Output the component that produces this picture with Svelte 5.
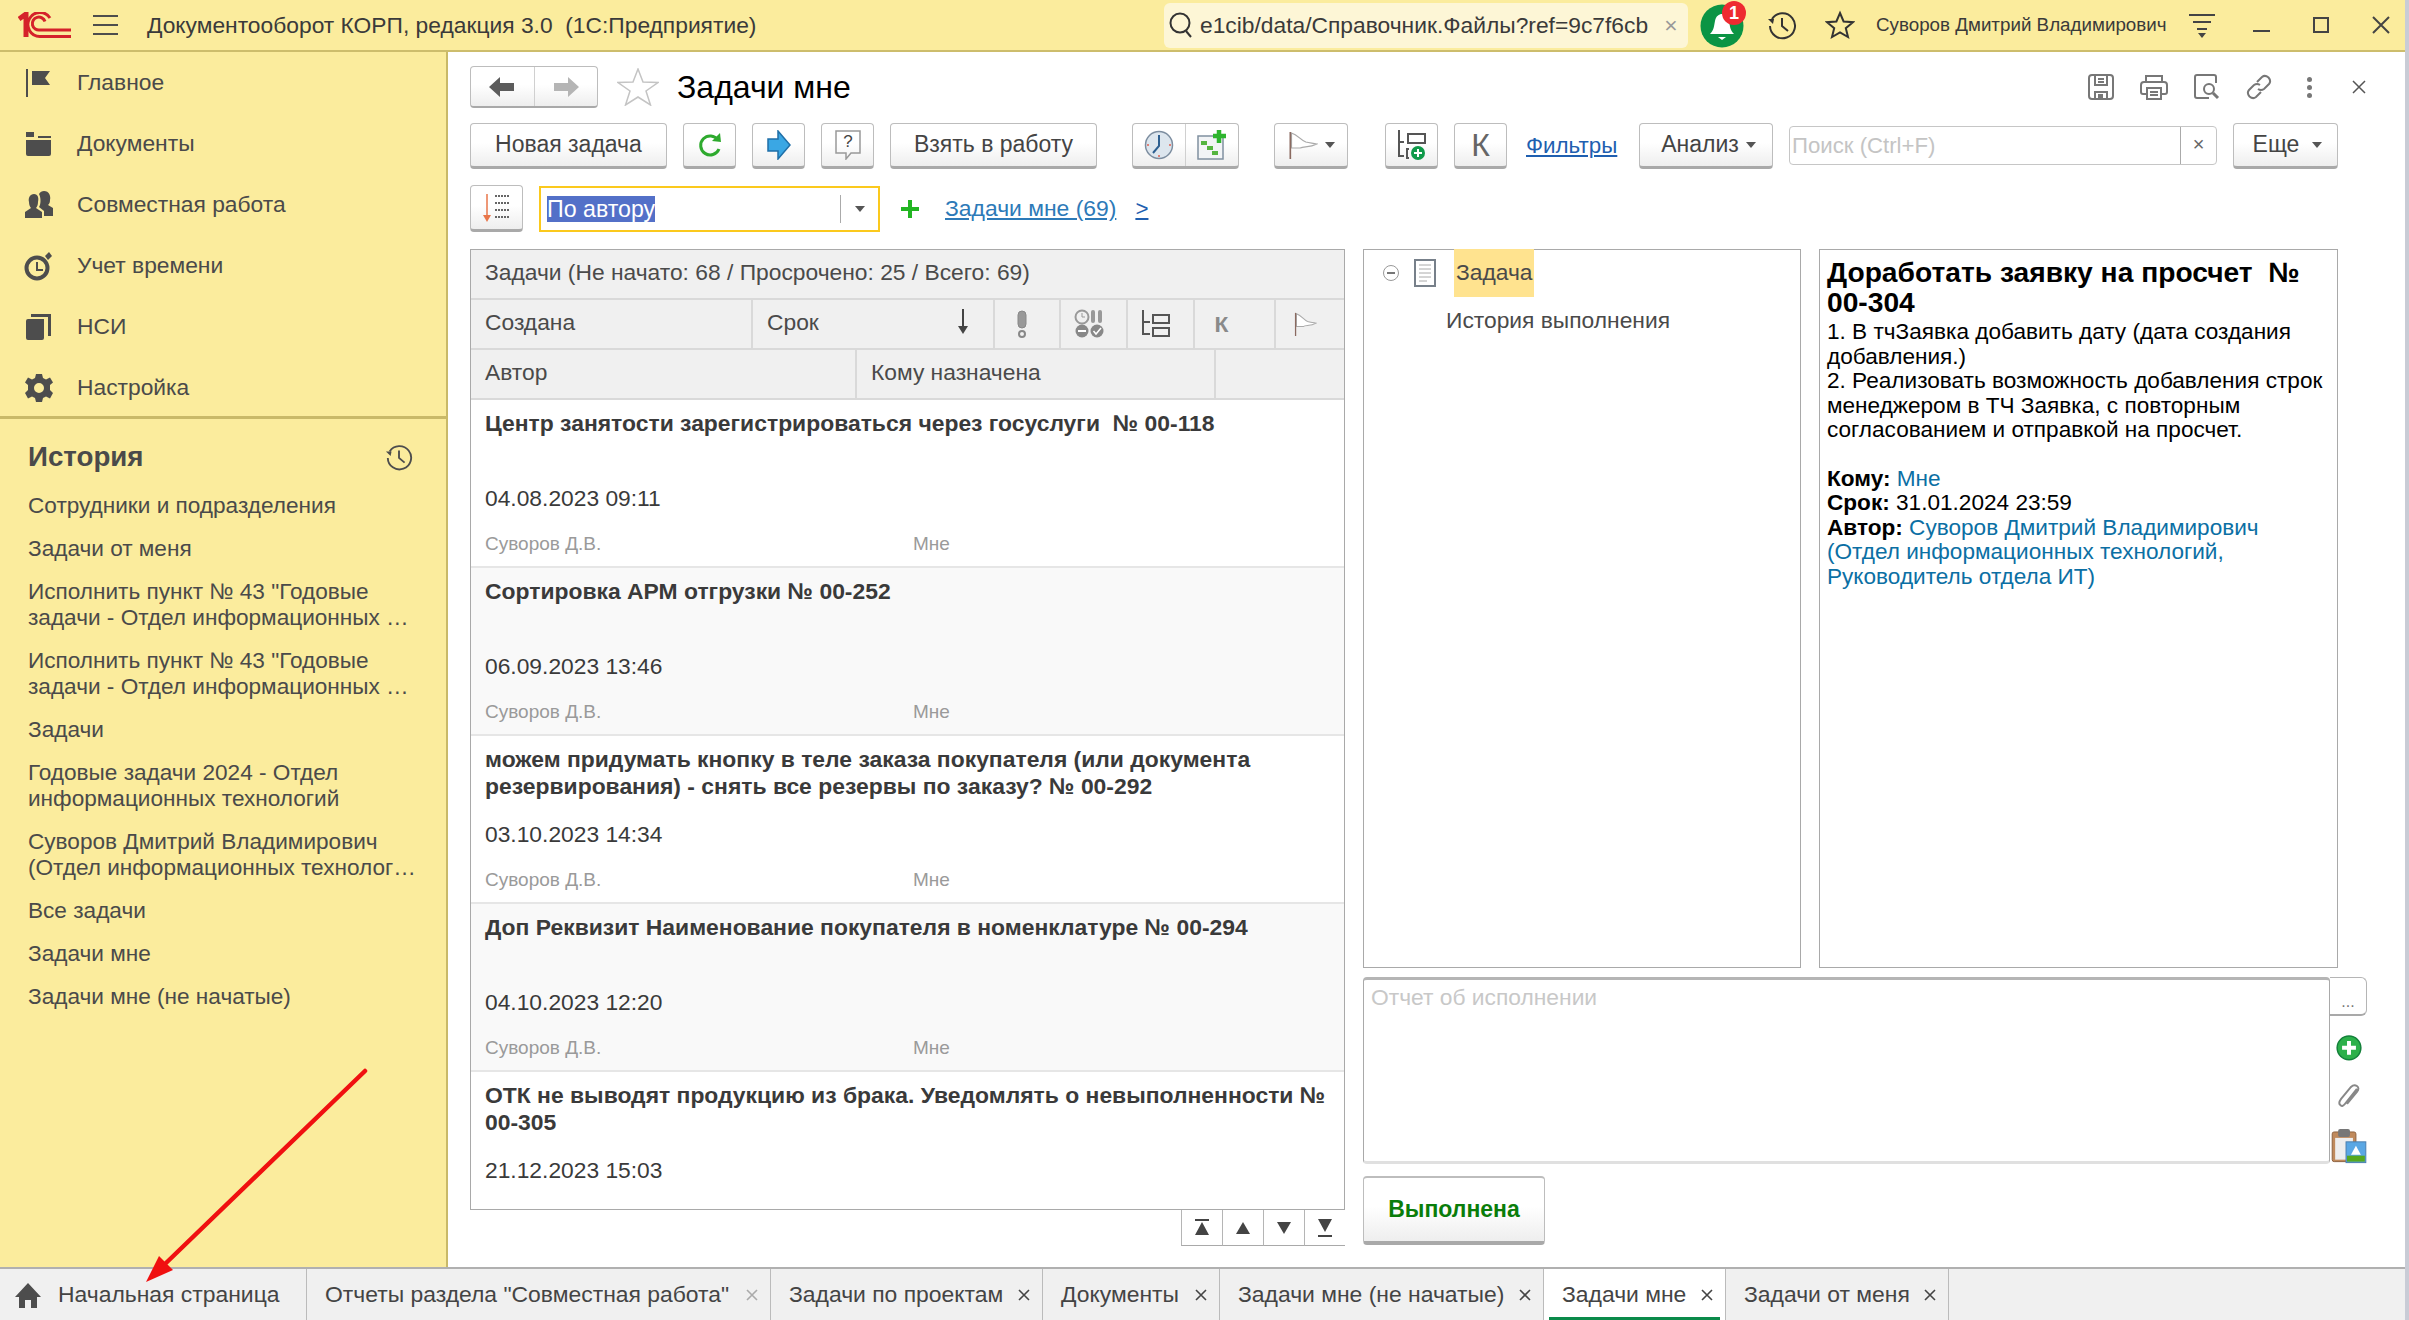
<script>
  const nav = ['Главное', 'Документы', 'Совместная работа', 'Учет времени', 'НСИ', 'Настройка'];

  const history = [
    'Сотрудники и подразделения',
    'Задачи от меня',
    'Исполнить пункт № 43 "Годовые задачи - Отдел информационных …',
    'Исполнить пункт № 43 "Годовые задачи - Отдел информационных …',
    'Задачи',
    'Годовые задачи 2024 - Отдел информационных технологий',
    'Суворов Дмитрий Владимирович (Отдел информационных технолог…',
    'Все задачи',
    'Задачи мне',
    'Задачи мне (не начатые)'
  ];

  // the last row is cut by the table's bottom edge, its author line is out of view
  const tasks = [
    { title: 'Центр занятости зарегистрироваться через госуслуги  № 00-118', date: '04.08.2023 09:11', meta: true },
    { title: 'Сортировка АРМ отгрузки № 00-252', date: '06.09.2023 13:46', meta: true },
    { title: 'можем придумать кнопку в теле заказа покупателя (или документа резервирования) - снять все резервы по заказу? № 00-292', date: '03.10.2023 14:34', meta: true },
    { title: 'Доп Реквизит Наименование покупателя в номенклатуре № 00-294', date: '04.10.2023 12:20', meta: true },
    { title: 'ОТК не выводят продукцию из брака. Уведомлять о невыполненности № 00-305', date: '21.12.2023 15:03', meta: false }
  ];

  const tabs = [
    { label: 'Начальная страница', w: 307, home: true },
    { label: 'Отчеты раздела "Совместная работа"', w: 464, dim: true },
    { label: 'Задачи по проектам', w: 272 },
    { label: 'Документы', w: 177 },
    { label: 'Задачи мне (не начатые)', w: 324 },
    { label: 'Задачи мне', w: 182, active: true },
    { label: 'Задачи от меня', w: 223 }
  ];
</script>

<div class="page">
  <div class="window">
    <header class="topbar">
      <svg class="logo" width="54" height="26" viewBox="0 0 54 26" fill="none" stroke="#d5222a">
        <path d="M1 7 L8 2 V25" stroke-width="5" />
        <path d="M32 6 A12 12 0 1 0 22 24.5 H53" stroke-width="3" />
        <path d="M27 9.5 A6.5 6.5 0 1 0 22 18 H53" stroke-width="3" />
      </svg>
      <div class="burger"><i></i><i></i><i></i></div>
      <div class="app-title">Документооборот КОРП, редакция 3.0  (1С:Предприятие)</div>
      <div class="url">
        <svg width="26" height="28" viewBox="0 0 26 28" fill="none" stroke="#333" stroke-width="2"><circle cx="12" cy="12" r="9.5" /><path d="M18 20 L23 26" /></svg>
        <span>e1cib/data/Справочник.Файлы?ref=9c7f6cb</span>
        <b>×</b>
      </div>
      <div class="bell">
        <svg width="44" height="44" viewBox="0 0 44 44">
          <circle cx="22" cy="22" r="21.5" fill="#0b9444" />
          <path d="M10 30 C14 26 14 22 15 17 C16 12 19 10 22 10 C25 10 28 12 29 17 C30 22 30 26 34 30 Z M18 33 H26 L22 36 Z" fill="#fff" />
        </svg>
        <span class="badge">1</span>
      </div>
      <svg class="hist" width="30" height="30" viewBox="0 0 30 30" fill="none" stroke="#333" stroke-width="2">
        <path d="M5 9 A12.5 12.5 0 1 1 3 16" /><path d="M1 9 H7 L6 14 Z" fill="#333" stroke="none" /><path d="M15 8 V16 L21 21" />
      </svg>
      <svg class="fav" width="30" height="30" viewBox="0 0 30 30" fill="none" stroke="#333" stroke-width="2">
        <path d="M15 3 L18.6 11.5 L28 12.2 L20.8 18.2 L23 27 L15 22.4 L7 27 L9.2 18.2 L2 12.2 L11.4 11.5 Z" />
      </svg>
      <div class="user">Суворов Дмитрий Владимирович</div>
      <svg class="funnel" width="26" height="26" viewBox="0 0 26 26" fill="none" stroke="#444" stroke-width="2">
        <path d="M0 3 H26 M4 10 H22 M8 17 H18" /><path d="M9 21 H17 L13 26 Z" fill="#444" stroke="none" />
      </svg>
      <div class="winbtn min"></div>
      <div class="winbtn max"></div>
      <svg class="winx" width="18" height="18" viewBox="0 0 18 18" stroke="#444" stroke-width="2"><path d="M1 1 L17 17 M17 1 L1 17" /></svg>
    </header>

    <div class="middle">
      <aside class="sidebar">
        <nav class="nav">
          {#each nav as item, i}
            <div class="nav-item">
              <svg width="30" height="30" viewBox="0 0 30 30" fill="#4d4d4d">
                {#if i === 0}
                  <path d="M2 1 H4 V29 H2 Z M8 3 H26 L21 10 L26 17 H8 Z" />
                {:else if i === 1}
                  <path d="M2 3 H10 V8 H2 Z M14 7 H27 V9 H14 Z M2 11 H27 V25 Q27 27 25 27 H4 Q2 27 2 25 Z" />
                {:else if i === 2}
                  <path d="M10 4 C14 4 15 8 14 12 C14 15 13 17 12 18 L18 22 V28 H1 V22 L7 18 C6 17 5 15 5 12 C4 8 6 4 10 4 Z" />
                  <path d="M20 1 C25 1 27 6 26 10 C26 13 25 14 24 15 L29 18 V26 H20 V21 L15 17 C17 14 17 8 15 4 C16 2 18 1 20 1 Z" />
                {:else if i === 3}
                  <circle cx="13" cy="17" r="10.5" fill="none" stroke="#4d4d4d" stroke-width="4" />
                  <path d="M12 11 H14 V18 H19 V20 H12 Z M21 5 L25 1 L28 5 L24 9 Z" />
                {:else if i === 4}
                  <path d="M2 9 Q2 7 4 7 H20 V26 Q20 28 18 28 H4 Q2 28 2 26 Z M7 2 H27 V24 H24 V5 H7 Z" />
                {:else}
                  <path d="M12 1 H18 L19 5 L22 6.5 L26 4.5 L29 9.5 L26 12 V17 L29 20 L26 25.5 L22 23.5 L19 25 L18 29 H12 L11 25 L8 23.5 L4 25.5 L1 20 L4 17 V12 L1 9.5 L4 4.5 L8 6.5 L11 5 Z M15 10 A5 5 0 1 0 15 20 A5 5 0 1 0 15 10 Z" fill-rule="evenodd" />
                {/if}
              </svg>
              <span>{item}</span>
            </div>
          {/each}
        </nav>
        <section class="history">
          <div class="history-head">
            <span>История</span>
            <svg width="28" height="28" viewBox="0 0 30 30" fill="none" stroke="#4d4d4d" stroke-width="2">
              <path d="M5 9 A12.5 12.5 0 1 1 3 16" /><path d="M1 9 H7 L6 14 Z" fill="#4d4d4d" stroke="none" /><path d="M15 8 V16 L21 21" />
            </svg>
          </div>
          {#each history as item}
            <div class="history-item">{item}</div>
          {/each}
        </section>
      </aside>

      <main class="content">
        <div class="title-row">
          <div class="btn nav-pair">
            <div class="half">
              <svg width="26" height="22" viewBox="0 0 26 22" fill="#5c5c5c"><path d="M0 11 L11 1 V7 H25 V15 H11 V21 Z" /></svg>
            </div>
            <div class="half">
              <svg width="26" height="22" viewBox="0 0 26 22" fill="#b5b5b5"><path d="M26 11 L15 1 V7 H1 V15 H15 V21 Z" /></svg>
            </div>
          </div>
          <svg class="page-star" width="42" height="38" viewBox="0 0 42 38" fill="#fff" stroke="#c4c4c4" stroke-width="1.5">
            <path d="M21 1 L26 14 L41 14.5 L29 23 L33.5 37 L21 29 L8.5 37 L13 23 L1 14.5 L16 14 Z" />
          </svg>
          <h1>Задачи мне</h1>
          <div class="form-tools">
            <svg width="26" height="26" viewBox="0 0 26 26" fill="none" stroke="#777" stroke-width="2">
              <rect x="1" y="1" width="24" height="24" rx="3" /><path d="M7 2 V11 H19 V2 M10 5 H16 M10 8 H16 M7 25 V18 H19 V25" /><rect x="10" y="20" width="5" height="5" fill="#777" stroke="none" />
            </svg>
            <svg width="28" height="26" viewBox="0 0 28 26" fill="none" stroke="#777" stroke-width="2">
              <path d="M6 8 V2 H22 V8 M6 20 H3 Q1 20 1 18 V11 Q1 8 4 8 H24 Q27 8 27 11 V18 Q27 20 25 20 H22" /><rect x="7" y="14" width="14" height="11" /><path d="M10 18 H18 M10 21 H18" />
            </svg>
            <svg width="26" height="26" viewBox="0 0 26 26" fill="none" stroke="#777" stroke-width="2">
              <path d="M15 24 H3 Q1 24 1 22 V3 Q1 1 3 1 H20 Q22 1 22 3 V9" /><circle cx="15" cy="15" r="5" /><path d="M19 19 L24 24" stroke-width="3" />
            </svg>
            <svg width="26" height="26" viewBox="0 0 26 26" fill="none" stroke="#777" stroke-width="2">
              <path d="M11 8 L16 3 Q19 0.5 22.5 3.5 Q25.5 7 23 10 L18 15 Q15 17 12 15" /><path d="M15 18 L10 23 Q7 25.5 3.5 22.5 Q0.5 19 3 16 L8 11 Q11 9 14 11" />
            </svg>
            <div class="dots"><i></i><i></i><i></i></div>
            <svg class="close" width="14" height="14" viewBox="0 0 14 14" stroke="#555" stroke-width="1.5"><path d="M1 1 L13 13 M13 1 L1 13" /></svg>
          </div>
        </div>

        <div class="cmd-row">
          <div class="btn text w197">Новая задача</div>
          <div class="btn icon ml16">
            <svg width="24" height="26" viewBox="0 0 24 26" fill="none" stroke="#2eaa2e" stroke-width="3"><path d="M20 8 A9.5 9.5 0 1 0 21 17" /><path d="M14 9 L23 10 L22 1 Z" fill="#2eaa2e" stroke="none" /></svg>
          </div>
          <div class="btn icon ml16">
            <svg width="24" height="30" viewBox="0 0 24 30"><path d="M1 9 H11 V1 L23 15 L11 29 V21 H1 Z" fill="#3aa7e4" stroke="#1f6fa8" stroke-width="1.5" /></svg>
          </div>
          <div class="btn icon ml16">
            <svg width="28" height="30" viewBox="0 0 28 30" fill="none" stroke="#999" stroke-width="1.5"><path d="M2 1 H26 V23 H17 L12 29 V23 H2 Z" /><text x="14" y="17" text-anchor="middle" fill="#444" stroke="none" class="qmark">?</text></svg>
          </div>
          <div class="btn text ml16 w207">Взять в работу</div>
          <div class="btn pair ml35">
            <div class="half h52">
              <svg width="30" height="30" viewBox="0 0 30 30" fill="#dde6ee" stroke="#7d8ea0" stroke-width="1.5"><circle cx="15" cy="15" r="13.5" /><path d="M15 5 V16 L9 23" fill="none" stroke="#2d5f90" stroke-width="2" /><path d="M3 15 H5 M25 15 H27 M15 25 V27" stroke="#e06050" /></svg>
            </div>
            <div class="half h52">
              <svg width="30" height="30" viewBox="0 0 30 30"><rect x="1" y="6" width="25" height="23" fill="#f2f4f6" stroke="#8090a0" stroke-width="1.5" /><rect x="4" y="11" width="6" height="4" fill="#55b540" /><rect x="10" y="16" width="6" height="4" fill="#55b540" /><rect x="15" y="21" width="6" height="4" fill="#55b540" /><path d="M16 6 H29 M22 0 V13" stroke="#2eb52e" stroke-width="4.5" /></svg>
            </div>
          </div>
          <div class="btn ml35 flagbtn">
            <svg width="31" height="30" viewBox="0 0 28 30" preserveAspectRatio="none" fill="#fff" stroke="#aaa" stroke-width="1.2"><path d="M4 3 C10 5 12 10 17 12 C20 13 22 13 27 14 C20 18 15 16 12 18 L4 18 Z" /><path d="M3 2 V29" stroke="#8a6a60" stroke-width="1.5" /></svg>
            <span class="caret"></span>
          </div>
          <div class="btn icon ml36">
            <svg width="32" height="32" viewBox="0 0 32 32" fill="none" stroke="#555" stroke-width="2">
              <path d="M3 1 V27 H8 M3 13 H8" /><rect x="12" y="5" width="17" height="9" /><path d="M13 20 H11 V29 H13" /><circle cx="22" cy="24" r="7" fill="#0f9a4a" stroke="none" /><path d="M18 24 H26 M22 20 V28" stroke="#fff" />
            </svg>
          </div>
          <div class="btn icon ml16 kbtn">К</div>
          <span class="link filters">Фильтры</span>
          <div class="btn text caret-btn analyze w134">Анализ<span class="caret"></span></div>
          <div class="search">
            <span>Поиск (Ctrl+F)</span>
            <b>×</b>
          </div>
          <div class="btn text caret-btn more-btn ml16 w105">Еще<span class="caret"></span></div>
        </div>

        <div class="filter-row">
          <div class="btn icon sort">
            <svg width="28" height="30" viewBox="0 0 28 30" fill="none" stroke="#666" stroke-width="2" stroke-dasharray="2 1">
              <path d="M4 1 V24" stroke="#e9764a" stroke-width="1.5" stroke-dasharray="none" /><path d="M0 22 H8 L4 29 Z" fill="#e9764a" stroke="none" /><path d="M12 3 H26 M12 10 H26 M12 17 H26 M12 24 H26" />
            </svg>
          </div>
          <div class="combo">
            <span class="selected">По автору</span>
            <span class="combo-arrow"><span class="caret"></span></span>
          </div>
          <svg class="plus" width="20" height="20" viewBox="0 0 20 20" stroke="#22b522" stroke-width="4"><path d="M10 1 V19 M1 10 H19" /></svg>
          <span class="link list-link">Задачи мне (69)</span>
          <span class="link gt">&gt;</span>
        </div>

        <div class="panels">
          <div class="left">
            <div class="table">
              <div class="caption">Задачи (Не начато: 68 / Просрочено: 25 / Всего: 69)</div>
              <div class="thead">
                <div class="th w282">Создана</div>
                <div class="th w242 sortcol">Срок
                  <svg width="12" height="28" viewBox="0 0 12 28" fill="#444"><path d="M5 1 H7 V20 H5 Z M1 18 H11 L6 26 Z" /></svg>
                </div>
                <div class="th w66 mid">
                  <svg width="16" height="28" viewBox="0 0 16 28" fill="#999" stroke="#888"><rect x="4" y="1" width="8" height="17" rx="4" /><circle cx="8" cy="24" r="3" fill="none" stroke-width="2" /></svg>
                </div>
                <div class="th w67 mid">
                  <svg width="30" height="30" viewBox="0 0 30 30"><circle cx="8" cy="8" r="6.5" fill="none" stroke="#999" stroke-width="2" /><path d="M8 4 V8 H11" fill="none" stroke="#999" /><rect x="17" y="1" width="4" height="13" rx="2" fill="#999" /><rect x="24" y="1" width="4" height="13" rx="2" fill="#999" /><circle cx="8" cy="22" r="6.5" fill="#888" /><path d="M4 22 H12" stroke="#fff" stroke-width="2" /><circle cx="23" cy="22" r="6.5" fill="#888" /><path d="M19.5 22 L22 25 L27 19" stroke="#fff" stroke-width="1.5" fill="none" /></svg>
                </div>
                <div class="th w67 mid">
                  <svg width="30" height="30" viewBox="0 0 30 30" fill="none" stroke="#555" stroke-width="2"><path d="M2 1 V25 H9 M2 13 H9" /><rect x="12" y="6" width="16" height="8" /><rect x="12" y="19" width="16" height="8" /></svg>
                </div>
                <div class="th w81 mid kth">К</div>
                <div class="th grow mid">
                  <svg width="24" height="28" viewBox="0 0 28 30" fill="#fff" stroke="#aaa" stroke-width="1.2"><path d="M4 3 C10 5 12 10 17 12 C20 13 22 13 27 14 C20 18 15 16 12 18 L4 18 Z" /><path d="M3 2 V29" stroke="#8a6a60" stroke-width="1.5" /></svg>
                </div>
              </div>
              <div class="thead">
                <div class="th w386">Автор</div>
                <div class="th w359">Кому назначена</div>
                <div class="th grow"></div>
              </div>
              {#each tasks as t, i}
                <div class="row" class:tinted={i % 2 === 1}>
                  <div class="row-title">{t.title}</div>
                  <div class="row-date">{t.date}</div>
                  {#if t.meta}
                    <div class="row-meta"><span>Суворов Д.В.</span><span>Мне</span></div>
                  {/if}
                </div>
              {/each}
            </div>
            <div class="pager">
              <div><svg width="18" height="18" viewBox="0 0 18 18" fill="#444"><path d="M2 0 H16 V2 H2 Z M9 3 L16 16 H2 Z" /></svg></div>
              <div><svg width="18" height="14" viewBox="0 0 18 14" fill="#444"><path d="M9 1 L16 13 H2 Z" /></svg></div>
              <div><svg width="18" height="14" viewBox="0 0 18 14" fill="#444"><path d="M9 13 L16 1 H2 Z" /></svg></div>
              <div><svg width="18" height="18" viewBox="0 0 18 18" fill="#444"><path d="M9 13 L16 0 H2 Z M2 16 H16 V18 H2 Z" /></svg></div>
            </div>
          </div>

          <div class="right">
            <div class="right-top">
              <div class="tree">
                <div class="tree-root">
                  <span class="toggle"></span>
                  <svg width="22" height="28" viewBox="0 0 22 28" fill="#fff" stroke="#77808a" stroke-width="2"><rect x="1" y="1" width="20" height="26" /><path d="M5 6 H17 M5 10 H17 M5 14 H17 M5 18 H17 M5 22 H13" stroke="#aaa" stroke-width="1" /></svg>
                  <span class="tree-sel">Задача</span>
                </div>
                <div class="tree-child">История выполнения</div>
              </div>
              <article class="detail">
                <h2>Доработать заявку на просчет  № 00-304</h2>
                <p>1. В тчЗаявка добавить дату (дата создания добавления.)<br />2. Реализовать возможность добавления строк менеджером в ТЧ Заявка, с повторным согласованием и отправкой на просчет.</p>
                <p class="facts">
                  <b>Кому:</b> <a href="#mne">Мне</a><br />
                  <b>Срок:</b> 31.01.2024 23:59<br />
                  <b>Автор:</b> <a href="#author">Суворов Дмитрий Владимирович<br />(Отдел информационных технологий,<br />Руководитель отдела ИТ)</a>
                </p>
              </article>
            </div>
            <div class="report">
              <div class="report-box">Отчет об исполнении</div>
              <div class="report-side">
                <div class="more">...</div>
                <svg class="add" width="26" height="26" viewBox="0 0 26 26"><circle cx="13" cy="13" r="12" fill="#2cb04a" stroke="#13803a" stroke-width="1.5" /><path d="M6 13 H20 M13 6 V20" stroke="#fff" stroke-width="4" /></svg>
                <svg class="clip" width="24" height="26" viewBox="0 0 24 26" fill="none" stroke="#888" stroke-width="2"><path d="M20 5 L8 20 Q5 24 3 21 Q1 19 4 15 L14 3 Q17 0 20 2 Q23 4 20 8 L10 20" /></svg>
                <svg class="board" width="36" height="36" viewBox="0 0 36 36"><rect x="1" y="4" width="24" height="30" rx="2" fill="#c08a5c" stroke="#8f6240" /><rect x="7" y="1" width="12" height="8" rx="2" fill="#777" /><rect x="4" y="10" width="18" height="22" fill="#eee" /><rect x="15" y="14" width="20" height="21" fill="#5aa7e4" stroke="#4a7fb0" /><rect x="16" y="28" width="18" height="6" fill="#56a81e" /><path d="M25 18 L30 27 H20 Z" fill="#fff" /></svg>
              </div>
            </div>
            <div class="btn done">Выполнена</div>
          </div>
        </div>
      </main>
    </div>

    <footer class="tabs">
      {#each tabs as tab}
        <div class="tab" class:active={tab.active} style="width: {tab.w}px">
          {#if tab.home}
            <svg width="28" height="28" viewBox="0 0 28 28" fill="#4d4d4d"><path d="M14 2 L27 16 H23 V27 H17 V19 H11 V27 H5 V16 H1 Z" /></svg>
          {/if}
          <span class="tab-label">{tab.label}</span>
          {#if !tab.home}
            <svg class="tab-x" class:dim={tab.dim} width="12" height="12" viewBox="0 0 12 12" stroke="#444" stroke-width="1.6"><path d="M1 1 L11 11 M11 1 L1 11" /></svg>
          {/if}
        </div>
      {/each}
    </footer>
  </div>

  <svg class="arrow" width="240" height="230" viewBox="0 0 240 230">
    <path d="M225 5 L26 197" stroke="#f01010" stroke-width="4.5" stroke-linecap="round" />
    <path d="M6 216 L19 190 L33 204 Z" fill="#f01010" />
  </svg>
</div>

<style>
  :global(body) {
    margin: 0;
    background: #c9ccd6;
  }

  .page {
    position: relative;
    width: 2409px;
    height: 1320px;
    overflow: hidden;
    background: #c9ccd6;
    font-family: "Liberation Sans", Arial, sans-serif;
    color: #4a4a4a;
  }

  .window {
    width: 2405px;
    height: 1320px;
    display: flex;
    flex-direction: column;
    background: #fff;
  }

  /* title bar */
  .topbar {
    height: 50px;
    flex: none;
    display: flex;
    align-items: center;
    background: #fbec9d;
    border-bottom: 2px solid #cdbd6c;
  }

  .logo { margin-left: 18px; }

  .burger {
    margin-left: 21px;
    width: 25px;
    height: 20px;
    display: flex;
    flex-direction: column;
    justify-content: space-between;
  }

  .burger i {
    height: 2px;
    background: #4d4d4d;
  }

  .app-title {
    margin-left: 29px;
    width: 1017px;
    font-size: 22.8px;
    color: #3a3a3a;
    white-space: pre;
  }

  .url {
    width: 524px;
    height: 45px;
    flex: none;
    display: flex;
    align-items: center;
    box-sizing: border-box;
    padding-left: 4px;
    background: #fdf6d6;
    border-radius: 6px;
    font-size: 22.8px;
    color: #3a3a3a;
    white-space: nowrap;
  }

  .url span { margin-left: 6px; }

  .url b {
    margin-left: 16px;
    font-weight: 400;
    color: #999;
  }

  .bell {
    position: relative;
    margin-left: 12px;
    width: 44px;
    height: 44px;
    margin-top: 2px;
  }

  .badge {
    position: absolute;
    left: 22px;
    top: -3px;
    width: 24px;
    height: 24px;
    border-radius: 50%;
    background: #ee2a30;
    color: #fff;
    font-size: 18px;
    font-weight: 700;
    text-align: center;
    line-height: 24px;
  }

  .hist { margin-left: 23px; }
  .fav { margin-left: 28px; }

  .user {
    margin-left: 21px;
    width: 313px;
    font-size: 18.8px;
    color: #3a3a3a;
    white-space: nowrap;
  }

  .winbtn {
    box-sizing: border-box;
  }

  .min {
    margin-left: 38px;
    width: 17px;
    height: 2px;
    background: #444;
    margin-top: 12px;
  }

  .max {
    margin-left: 43px;
    width: 16px;
    height: 16px;
    border: 2px solid #444;
  }

  .winx { margin-left: 43px; }

  /* sidebar */
  .middle {
    flex: 1;
    min-height: 0;
    display: flex;
  }

  .sidebar {
    width: 448px;
    flex: none;
    box-sizing: border-box;
    background: #fbec9d;
    border-right: 2px solid #c9b968;
  }

  .nav {
    height: 367px;
    box-sizing: border-box;
    padding-top: 0;
    border-bottom: 3px solid #c9b968;
  }

  .nav-item {
    height: 61px;
    display: flex;
    align-items: center;
    padding-left: 24px;
    font-size: 22.8px;
  }

  .nav-item span { margin-left: 23px; }

  .history {
    padding: 0 28px;
  }

  .history-head {
    height: 76px;
    display: flex;
    align-items: center;
    justify-content: space-between;
    padding-right: 5px;
    font-size: 27.7px;
    font-weight: 700;
    margin-bottom: -2px;
  }

  .history-item {
    font-size: 22.6px;
    line-height: 26px;
    margin-bottom: 17px;
    width: 392px;
  }

  /* form */
  .content {
    flex: 1;
    min-width: 0;
    box-sizing: border-box;
    padding: 14px 0 0 22px;
  }

  .title-row {
    height: 42px;
    display: flex;
    align-items: center;
  }

  .btn {
    box-sizing: border-box;
    flex: none;
    display: flex;
    align-items: center;
    justify-content: center;
    background: linear-gradient(#fff 45%, #eeeeee);
    border: 1px solid #bdbdbd;
    border-bottom: 3px solid #a9a9a9;
    border-radius: 4px;
    color: #444;
    font-size: 23px;
    white-space: nowrap;
  }

  .nav-pair {
    width: 128px;
    height: 42px;
    border-width: 1px 1px 2px;
  }

  .half {
    flex: 1;
    height: 100%;
    display: flex;
    align-items: center;
    justify-content: center;
  }

  .half + .half { border-left: 1px solid #d0d0d0; }

  .page-star { margin-left: 19px; }

  h1 {
    margin: 0 0 0 18px;
    font-size: 32px;
    font-weight: 400;
    color: #000;
  }

  .form-tools {
    margin-left: auto;
    margin-right: 39px;
    display: flex;
    align-items: center;
    gap: 26px;
  }

  .dots {
    display: flex;
    flex-direction: column;
    gap: 3px;
    margin-left: 9px;
  }

  .dots i {
    width: 5px;
    height: 5px;
    border-radius: 50%;
    background: #777;
  }

  .close { margin-left: 14px; }

  .cmd-row {
    height: 46px;
    margin-top: 15px;
    display: flex;
  }

  .text { padding-bottom: 1px; }
  .w197 { width: 197px; }
  .w207 { width: 207px; }
  .w134 { width: 134px; }
  .w105 { width: 105px; }
  .ml16 { margin-left: 16px; }
  .ml35 { margin-left: 35px; }
  .ml36 { margin-left: 37px; }

  .icon { width: 53px; }

  .pair { width: 107px; }
  .flagbtn {
    width: 74px;
    gap: 7px;
  }

  .kbtn {
    font-size: 32px;
    color: #666;
  }

  .qmark {
    font-family: "Liberation Sans", sans-serif;
    font-size: 17px;
  }

  .caret {
    display: inline-block;
    width: 0;
    height: 0;
    border: 5px solid transparent;
    border-top: 6px solid #555;
    border-bottom: 0;
  }

  .caret-btn { gap: 9px; }
  .analyze { gap: 7px; padding-left: 5px; }
  .more-btn { gap: 13px; padding-left: 4px; }

  .link {
    color: #1f5fb0;
    text-decoration: underline;
    font-size: 22.4px;
  }

  .filters {
    margin-left: 19px;
    width: 113px;
    align-self: center;
  }

  .search {
    box-sizing: border-box;
    width: 428px;
    height: 39px;
    margin-top: 3px;
    margin-left: 16px;
    display: flex;
    align-items: center;
    justify-content: space-between;
    border: 1px solid #c6c6c6;
    border-radius: 4px;
    padding-left: 2px;
    font-size: 22.2px;
    color: #c4c4c4;
    flex: none;
  }

  .search b {
    width: 36px;
    height: 100%;
    box-sizing: border-box;
    border-left: 1px solid #aaa;
    font-weight: 400;
    color: #666;
    font-size: 20px;
    text-align: center;
    line-height: 35px;
  }

  .filter-row {
    height: 47px;
    margin-top: 16px;
    display: flex;
    align-items: center;
  }

  .sort { height: 47px; }

  .combo {
    box-sizing: border-box;
    width: 341px;
    height: 46px;
    margin-left: 16px;
    display: flex;
    align-items: center;
    justify-content: space-between;
    border: 2px solid #fbc91d;
    padding-left: 6px;
    font-size: 23.2px;
  }

  .selected {
    background: #5370c8;
    color: #fff;
    line-height: 26px;
  }

  .combo-arrow {
    width: 37px;
    height: 28px;
    border-left: 1px solid #aaa;
    display: flex;
    align-items: center;
    justify-content: center;
  }

  .plus { margin-left: 20px; }

  .list-link {
    margin-left: 25px;
    color: #2d7ab8;
    font-size: 22.9px;
  }

  .gt { margin-left: 19px; }

  .panels {
    margin-top: 17px;
    display: flex;
    gap: 18px;
  }

  .left { width: 875px; flex: none; }

  .table {
    box-sizing: border-box;
    height: 961px;
    overflow: hidden;
    border: 1px solid #a9a9a9;
    font-size: 22.8px;
  }

  .caption, .thead {
    height: 50px;
    box-sizing: border-box;
    background: #f0f0f0;
    border-bottom: 2px solid #d9d9d9;
    display: flex;
  }

  .caption {
    align-items: center;
    padding: 0 0 4px 14px;
  }

  .th {
    box-sizing: border-box;
    flex: none;
    display: flex;
    align-items: center;
    padding: 0 0 4px 14px;
    border-right: 2px solid #d9d9d9;
  }

  .th:last-child { border-right: 0; }
  .grow { flex: 1; }
  .mid { justify-content: center; padding: 0 10px 0 0; }
  .w282 { width: 282px; }
  .w242 { width: 242px; }
  .w66 { width: 66px; }
  .w67 { width: 67px; }
  .w81 { width: 81px; }
  .w386 { width: 386px; }
  .w359 { width: 359px; }
  .sortcol { justify-content: space-between; padding-right: 24px; }
  .kth { font-weight: 700; color: #8a8a8a; padding-right: 26px; }

  .row {
    box-sizing: border-box;
    height: 168px;
    padding: 10px 14px 0;
    border-bottom: 2px solid #e6e6e6;
    background: #fff;
  }

  .tinted { background: #f9f9f9; }

  .row-title {
    height: 75px;
    font-size: 22.9px;
    font-weight: 700;
    line-height: 26.5px;
    color: #3a3a3a;
    white-space: pre-wrap;
  }

  .row-date {
    line-height: 26px;
    color: #3a3a3a;
  }

  .row-meta {
    margin-top: 22px;
    display: flex;
    font-size: 19px;
    color: #9a9a9a;
  }

  .row-meta span:first-child { width: 428px; }

  .pager {
    height: 36px;
    display: flex;
    justify-content: flex-end;
  }

  .pager div {
    box-sizing: border-box;
    width: 41px;
    display: flex;
    align-items: center;
    justify-content: center;
    border-left: 1px solid #b5b5b5;
    border-bottom: 1px solid #a9a9a9;
  }

  .right { width: 1005px; flex: none; }

  .right-top {
    height: 719px;
    display: flex;
    gap: 18px;
  }

  .tree, .detail {
    box-sizing: border-box;
    border: 1px solid #a9a9a9;
  }

  .tree { width: 438px; flex: none; font-size: 22.8px; }

  .tree-root {
    height: 46px;
    display: flex;
    align-items: center;
    padding-left: 19px;
  }

  .toggle {
    position: relative;
    box-sizing: border-box;
    width: 16px;
    height: 16px;
    border: 1px solid #999;
    border-radius: 50%;
  }

  .toggle::after {
    content: '';
    position: absolute;
    left: 3px;
    right: 3px;
    top: 6px;
    height: 2px;
    background: #777;
  }

  .tree-root svg { margin-left: 15px; }

  .tree-sel {
    margin-left: 18px;
    height: 48px;
    padding: 0 2px;
    line-height: 46px;
    background: #ffe38f;
  }

  .tree-child {
    margin: 11px 0 0 82px;
    line-height: 26px;
  }

  .detail {
    width: 519px;
    flex: none;
    padding: 7px 7px;
    color: #000;
    font-size: 22.6px;
    line-height: 24.6px;
  }

  h2 {
    margin: 0 0 3px;
    font-size: 28.2px;
    line-height: 30px;
    white-space: pre-wrap;
  }

  .detail p { margin: 0; }
  .detail .facts { margin-top: 23.6px; }
  .detail a {
    color: #0b6fa4;
    text-decoration: none;
  }

  .report {
    height: 187px;
    margin-top: 9px;
    display: flex;
  }

  .report-box {
    box-sizing: border-box;
    width: 967px;
    flex: none;
    border: 1px solid #a9a9a9;
    border-top: 3px solid #b5b5b5;
    border-bottom: 3px solid #e0e0e0;
    border-radius: 4px;
    padding: 4px 7px;
    font-size: 22.8px;
    color: #c8c8c8;
  }

  .report-side {
    width: 38px;
    display: flex;
    flex-direction: column;
    align-items: center;
  }

  .more {
    box-sizing: border-box;
    width: 37px;
    height: 39px;
    align-self: flex-start;
    border: 1px solid #b5b5b5;
    border-left: 0;
    border-bottom: 2px solid #a9a9a9;
    border-radius: 0 6px 6px 0;
    text-align: center;
    line-height: 48px;
    font-size: 16px;
    color: #777;
  }

  .add { margin-top: 19px; }
  .clip { margin-top: 23px; }
  .board { margin-top: 19px; }

  .done {
    width: 182px;
    height: 69px;
    margin-top: 12px;
    border-top-width: 2px;
    border-bottom-width: 4px;
    font-weight: 700;
    color: #0a7d0a;
  }

  /* tabs */
  .tabs {
    height: 53px;
    flex: none;
    box-sizing: border-box;
    display: flex;
    background: #f0f0f0;
    border-top: 2px solid #b0b0b0;
    font-size: 22.9px;
  }

  .tab {
    position: relative;
    box-sizing: border-box;
    flex: none;
    display: flex;
    align-items: center;
    justify-content: space-between;
    padding: 0 12px 0 18px;
    border-right: 1px solid #bbb;
    color: #444;
    white-space: nowrap;
  }

  .tab svg:first-child { margin-right: 16px; flex: none; margin-left: -4px; }
  .tab-label { flex: 1; }
  .tab-x.dim { stroke: #aaa; }

  .active { background: #fff; }

  .active::after {
    content: '';
    position: absolute;
    left: 5px;
    right: 5px;
    bottom: 0;
    height: 3px;
    background: #0a8a4a;
  }

  /* red annotation drawn over the screenshot */
  .arrow {
    position: absolute;
    left: 140px;
    top: 1066px;
    pointer-events: none;
  }
</style>
